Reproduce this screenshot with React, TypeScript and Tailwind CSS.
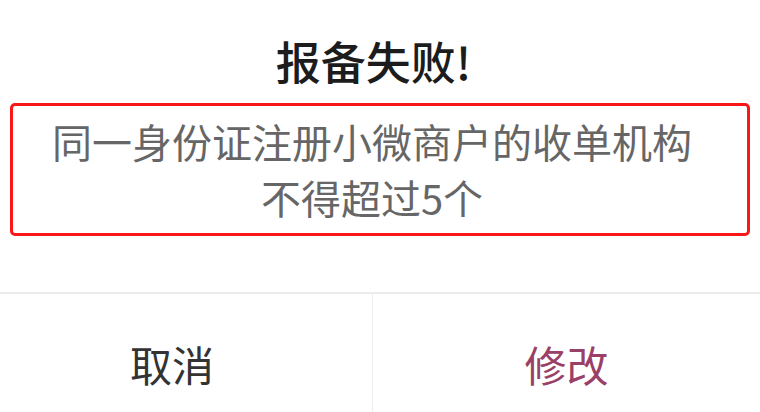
export default function App() {
  return (
    <div
      className="w-[760px] h-[412px] overflow-hidden bg-white"
      style={{ fontFamily: '"Noto Sans CJK SC", "Noto Sans", sans-serif' }}
    >
      <div className="pt-[37px] pr-[13px] text-center text-[45px] leading-[48px] font-medium text-[#1c1c1c]">
        报备失败!
      </div>

      <div className="mx-[10px] mt-[18px] h-[133px] rounded-[5px] border-[3px] border-[#fa1717] pt-[7px] pr-[16px] text-center text-[40px] leading-[56px] text-[#666666]">
        <p>同一身份证注册小微商户的收单机构</p>
        <p>不得超过5个</p>
      </div>

      <div className="mt-[56px] grid grid-cols-[372px_1fr] border-t-2 border-[#ececec]">
        <button className="flex h-[138px] items-center justify-center pr-[28px] text-[42px] text-[#333333]">
          取消
        </button>
        <button className="flex h-[138px] items-center justify-center border-l border-[#eeeeee] text-[42px] text-[#9a4066]">
          修改
        </button>
      </div>
    </div>
  );
}
